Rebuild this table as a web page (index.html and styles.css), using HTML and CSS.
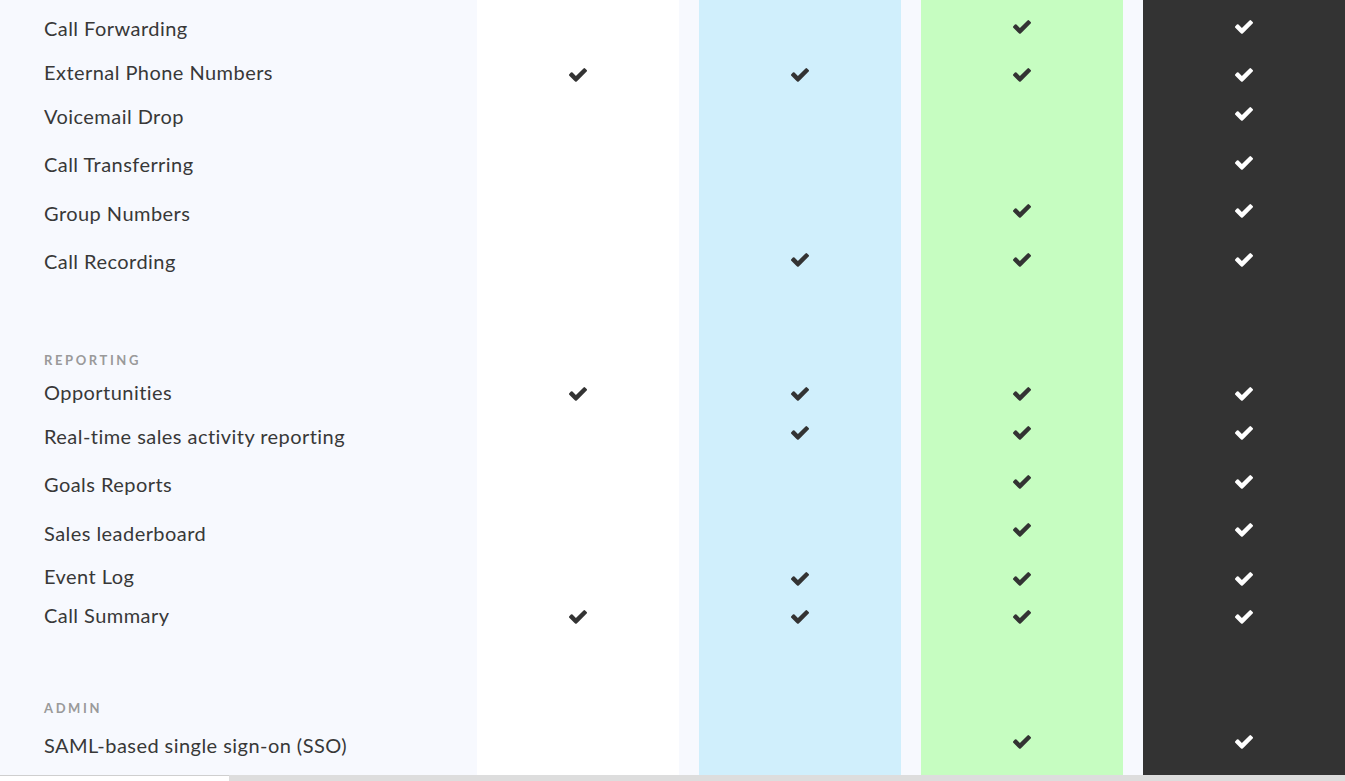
FILE: index.html
```html
<!DOCTYPE html>
<html lang="en">
<head>
    <meta charset="UTF-8">
    <meta name="viewport" content="width=device-width, initial-scale=1.0">
    <title>Plan Comparison</title>
    <link rel="stylesheet" href="styles.css">
</head>
<body>
    <main class="compare">
        <div class="labels">
            <div class="feature">Call Forwarding</div>
            <div class="feature">External Phone Numbers</div>
            <div class="feature">Voicemail Drop</div>
            <div class="feature">Call Transferring</div>
            <div class="feature">Group Numbers</div>
            <div class="feature">Call Recording</div>
            <div class="section">Reporting</div>
            <div class="feature">Opportunities</div>
            <div class="feature">Real-time sales activity reporting</div>
            <div class="feature">Goals Reports</div>
            <div class="feature">Sales leaderboard</div>
            <div class="feature">Event Log</div>
            <div class="feature">Call Summary</div>
            <div class="section">Admin</div>
            <div class="feature">SAML-based single sign-on (SSO)</div>
        </div>
        <div class="plans">
            <div class="plan basic" id="plan-basic"></div>
            <div class="plan standard" id="plan-standard"></div>
            <div class="plan pro" id="plan-pro"></div>
            <div class="plan enterprise" id="plan-enterprise"></div>
        </div>
    </main>
    <div class="scrollbar">
        <div class="scroll-left"></div>
    </div>
    <script>
        // rows: forwarding, external, voicemail, transferring, group, recording,
        // opportunities, realtime, goals, leaderboard, eventlog, summary, sso
        const plans = {
            "plan-basic":      [0, 1, 0, 0, 0, 0, 1, 0, 0, 0, 0, 1, 0],
            "plan-standard":   [0, 1, 0, 0, 0, 1, 1, 1, 0, 0, 1, 1, 0],
            "plan-pro":        [1, 1, 0, 0, 1, 1, 1, 1, 1, 1, 1, 1, 1],
            "plan-enterprise": [1, 1, 1, 1, 1, 1, 1, 1, 1, 1, 1, 1, 1]
        };

        const checkSvg = `<svg class="check" viewBox="121 338 1550 1184" width="18" height="14"><path fill="currentColor" d="M1671 566q0 40-28 68l-724 724-136 136q-28 28-68 28t-68-28l-136-136-362-362q-28-28-28-68t28-68l136-136q28-28 68-28t68 28l294 295 656-657q28-28 68-28t68 28l136 136q28 28 28 68z"/></svg>`;

        for (let id in plans) {
            let col = document.getElementById(id);
            plans[id].forEach((has) => {
                let cell = document.createElement("div");
                cell.className = "cell";
                if (has) cell.innerHTML = checkSvg;
                col.appendChild(cell);
            });
        }
    </script>
</body>
</html>
```

FILE: styles.css
```css
* {
    margin: 0;
    padding: 0;
    box-sizing: border-box;
}
body {
    background: #f7f9fe;
    font-family: Lato, "Noto Sans", sans-serif;
    color: #333;
    overflow: hidden;
}
.compare {
    display: flex;
    height: 775px;
}
.labels {
    width: 477px;
    padding: 16px 0 0 44px;
    display: grid;
    grid-template-rows: 44px 44px 48px 49px 48px 103px 28px 44px 48px 49px 43px 39px 97px 33px 24px;
    align-content: start;
}
.feature {
    font-size: 20px;
    line-height: 24px;
    letter-spacing: 0.45px;
    color: #383838;
}
.section {
    font-size: 13px;
    line-height: 16px;
    font-weight: 700;
    letter-spacing: 2.6px;
    text-transform: uppercase;
    color: #9a9a9a;
}
.plans {
    display: flex;
    gap: 20px;
}
.plan {
    width: 202px;
    padding-top: 15px;
    display: grid;
    grid-template-rows: 48px 39px 49px 48px 49px 134px 39px 49px 48px 49px 38px 125px 24px;
    align-content: start;
    color: #333;
}
.basic {
    background: #fff;
}
.standard {
    background: #d0effc;
}
.pro {
    background: #c6fdc1;
}
.enterprise {
    background: #333;
    color: #fff;
}
.cell {
    height: 24px;
    display: flex;
    justify-content: center;
    align-items: center;
}
.scrollbar {
    height: 6px;
    background: #dddddd;
}
.scroll-left {
    width: 229px;
    height: 6px;
    background: #fff;
    border-top: 1px solid #cfcfcf;
}
```
